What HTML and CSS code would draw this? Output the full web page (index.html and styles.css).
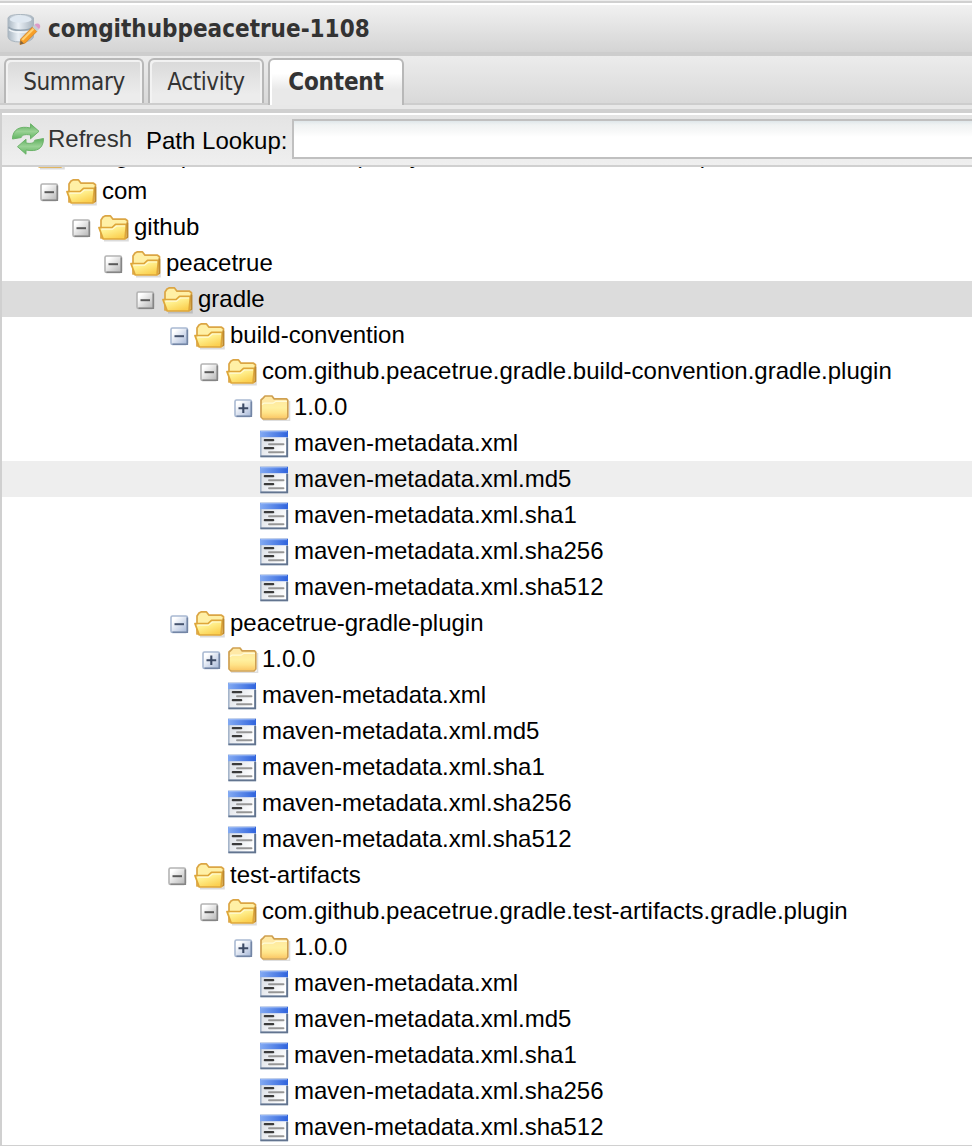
FILE: index.html
```
<!DOCTYPE html>
<html lang="en">
<head>
<meta charset="utf-8">
<title>comgithubpeacetrue-1108</title>
<link rel="stylesheet" href="styles.css">
</head>
<body>
<svg class="defs" width="0" height="0" aria-hidden="true">
  <defs>
    <linearGradient id="gold" x1="0" y1="0" x2="0.6" y2="1"><stop offset="0" stop-color="#fffbc4"/><stop offset="0.45" stop-color="#fff08e"/><stop offset="1" stop-color="#fbd050"/></linearGradient>
    <linearGradient id="shut" x1="0" y1="0" x2="0" y2="1"><stop offset="0" stop-color="#ffe9a0"/><stop offset="0.4" stop-color="#fff0a0"/><stop offset="0.7" stop-color="#ffe388"/><stop offset="1" stop-color="#fbc968"/></linearGradient>
    <linearGradient id="blue" x1="0" y1="0" x2="1" y2="0"><stop offset="0" stop-color="#83aaf2"/><stop offset="1" stop-color="#2f63dd"/></linearGradient>
    <linearGradient id="sheet" x1="0" y1="0" x2="1" y2="0.6"><stop offset="0" stop-color="#d5dae2"/><stop offset="1" stop-color="#ffffff"/></linearGradient>
    <linearGradient id="btnGrey" x1="0" y1="0" x2="1" y2="1"><stop offset="0.2" stop-color="#ffffff"/><stop offset="1" stop-color="#b4b4b4"/></linearGradient>
    <linearGradient id="btnBlue" x1="0" y1="0" x2="1" y2="1"><stop offset="0.2" stop-color="#ffffff"/><stop offset="1" stop-color="#a5b7d8"/></linearGradient>
    <linearGradient id="drum" x1="0" y1="0" x2="1" y2="0"><stop offset="0" stop-color="#a9b6c1"/><stop offset="0.4" stop-color="#eaf0f6"/><stop offset="1" stop-color="#a7b3be"/></linearGradient>
    <linearGradient id="leaf" x1="0" y1="0" x2="0" y2="1"><stop offset="0" stop-color="#5cae5c"/><stop offset="0.5" stop-color="#9ad295"/><stop offset="1" stop-color="#5fb45f"/></linearGradient>

    <symbol id="open" viewBox="0 0 32 32">
      <path d="M6 29.6H29.8V12" fill="none" stroke="#000" stroke-opacity=".14" stroke-width="2"/>
      <path d="M3 27V9L5 6 7 4.9H12.5L15 8.2H27.5L29.5 9.7V26L28 27.5Z" fill="#fff0a6" stroke="#dba544" stroke-width="1.7" stroke-linejoin="round"/>
      <path d="M1 16.6H14L17.5 13.4H28.4L27 28H5.2Z" fill="url(#gold)" stroke="#dea63a" stroke-width="1.7" stroke-linejoin="round"/>
      <path d="M29.3 11.5V27" stroke="#bd8830" stroke-width="1.5"/>
      <path d="M3.5 18.1H14.5L18.3 15H27" fill="none" stroke="#fffad6" stroke-width="1.2"/>
    </symbol>
    <symbol id="closed" viewBox="0 0 32 32">
      <path d="M3 29.3H29.5V10" fill="none" stroke="#000" stroke-opacity=".13" stroke-width="1.6"/>
      <path d="M1 26V9L3.3 6.9 5 5H12L14 7.8H26.5L27.8 9.4V26L26 28H3Z" fill="#ffe9a6" stroke="#cfa050" stroke-width="1.7" stroke-linejoin="round"/>
      <path d="M2 13L4 11.8H13L16 10H27V25.8L25.8 27H3.2L2 25.8Z" fill="url(#shut)"/>
      <path d="M2 13.4L4 12.2H13L16 10.3H27" fill="none" stroke="#fffbd8" stroke-width="1.2"/>
    </symbol>
    <symbol id="file" viewBox="0 0 32 32">
      <rect x=".8" y="4.4" width="26.4" height="25" fill="url(#sheet)" stroke="#a5b5ca" stroke-width="1.6"/>
      <path d="M27.2 11V29.4H.5" fill="none" stroke="#62748f" stroke-width="1.9"/>
      <path d="M0 3.8H28V10.2H0Z" fill="url(#blue)"/>
      <path d="M1 4.6H27" stroke="#a9c5fa" stroke-opacity=".6" stroke-width="1.2"/>
      <path d="M4.8 13.2H13.2M4.8 21.2H13.2" stroke="#3a3a3a" stroke-width="2.2" stroke-linecap="round"/>
      <path d="M9 17.2H23.5M9 25.2H23.5" stroke="#969696" stroke-width="1.9" stroke-linecap="round"/>
    </symbol>
    <symbol id="minus" viewBox="0 0 20 20">
      <rect x="1" y="1" width="16.4" height="16.4" rx="1.5" fill="url(#btnGrey)" stroke="#b4b4b4" stroke-width="1.6"/>
      <path d="M17.3 2.5V17.3H2.5" fill="none" stroke="#858585" stroke-width="1.6"/>
      <path d="M4.5 9.2H14" stroke="#5a5a5a" stroke-width="2"/>
    </symbol>
    <symbol id="minusBlue" viewBox="0 0 20 20">
      <rect x="1" y="1" width="16.4" height="16.4" rx="1.5" fill="url(#btnBlue)" stroke="#a9b9d2" stroke-width="1.6"/>
      <path d="M17.3 2.5V17.3H2.5" fill="none" stroke="#7385a5" stroke-width="1.6"/>
      <path d="M4.5 9.2H14" stroke="#46546f" stroke-width="2"/>
    </symbol>
    <symbol id="plus" viewBox="0 0 20 20">
      <rect x="1" y="1" width="16.4" height="16.4" rx="1.5" fill="url(#btnBlue)" stroke="#a9b9d2" stroke-width="1.6"/>
      <path d="M17.3 2.5V17.3H2.5" fill="none" stroke="#7385a5" stroke-width="1.6"/>
      <path d="M4.5 9.2H14.2M9.3 4.4V14" stroke="#3b4964" stroke-width="2.1"/>
    </symbol>
  </defs>
</svg>

<div class="panel">
  <header class="title-bar">
    <svg class="title-icon" viewBox="0 0 34 34">
      <path d="M1 5Q2 1.5 13.5 1.5T26.5 5V24Q25 29 13.5 29T1 24Z" fill="url(#drum)" stroke="#a9b5bf" stroke-width="1"/>
      <ellipse cx="13.7" cy="6.2" rx="11" ry="3.6" fill="#dfe8f1"/>
      <path d="M1.5 14Q4 17.3 13.5 17.3T26 14" fill="none" stroke="#94a3b0" stroke-width="1.6"/>
      <path d="M2 16.5Q5 19.3 13.5 19.3T25.5 16.5" fill="none" stroke="#f2f6f9" stroke-width="1.6"/>
      <path d="M13 31.5L13.7 26 25.5 14 30 18.3 18.3 30Z" fill="#f79e26" stroke="#cf8128" stroke-width=".8"/>
      <path d="M15.3 27L26.6 15.7" stroke="#ffd071" stroke-width="2"/>
      <path d="M13 31.5L13.6 27.6 17 30.6Z" fill="#85653d"/>
      <path d="M25.3 14L27.5 11.8 32 16.2 29.9 18.3Z" fill="#c6cdd2"/>
      <path d="M27.5 11.8L28.8 10.7Q31.5 10 33 12 34 14.3 32 16.2Z" fill="#dc9ac8"/>
    </svg>
    <h1 class="title"><span class="title-text">comgithubpeacetrue-1108</span></h1>
  </header>

  <nav class="tabs">
    <div class="tab tab-summary"><span>Summary</span></div>
    <div class="tab tab-activity"><span>Activity</span></div>
    <div class="tab tab-content active"><span>Content</span></div>
  </nav>
  <div class="tab-spacer"></div>

  <main class="body">
    <div class="toolbar">
      <svg class="refresh-icon" viewBox="0 0 32 32">
        <path d="M.5 16C.5 6.5 8 2.5 18.5 5V.8L27 8.3 18.5 15.8V12C12 10.8 9.8 12.5 9.2 14.5Z" fill="url(#leaf)" stroke="#6cb36a" stroke-width="1" stroke-linejoin="round"/>
        <path d="M31.5 15.5C31.5 25.5 25 29.2 14 27V31.2L5.5 23.7 14 16.2V20C20 21.2 22.3 19.5 22.8 17.2Z" fill="url(#leaf)" stroke="#6cb36a" stroke-width="1" stroke-linejoin="round"/>
      </svg>
      <span class="refresh">Refresh</span>
      <label class="lookup" for="path">Path Lookup:</label>
      <input class="path" id="path" type="text">
    </div>
    <div class="tree" id="tree"></div>
  </main>
</div>
<script src="tree.js"></script>
</body>
</html>
```
FILE: styles.css
```
* { box-sizing: border-box; }
body { margin: 0; background: #fff; color: #000; font-family: "Liberation Sans", Arial, sans-serif; font-size: 24px; }
.defs { display: block; }
svg { flex: none; }
.panel { width: 972px; height: 1146px; overflow: hidden; display: flex; flex-direction: column; }

.title-bar { height: 56px; flex: none; display: flex; align-items: flex-start; padding: 11px 0 0 7px;
  border-top: 1px solid #ececec; border-bottom: 4px solid #cdcdcd;
  background: linear-gradient(#d0d0d0 0 2px, #fff 2px 4px, #f1f1f1 4px, #d4d4d4 100%); }
.title-icon { width: 34px; height: 34px; margin-top: 1px; }
.title { margin: 0 0 0 7px; font: bold 24px/34px "DejaVu Sans Condensed", "DejaVu Sans", sans-serif; font-stretch: condensed; color: #333; white-space: nowrap; }
.title-text { display: block; }

.tabs { height: 49px; flex: none; display: flex; align-items: flex-start; gap: 4px; padding: 2px 0 0 4px;
  background: linear-gradient(#cdcdcd, #cdcdcd) 0 47px / 100% 2px no-repeat, linear-gradient(#ececec, #d8d8d8); }
.tab { height: 45px; border: 2px solid #b8b8b8; border-bottom: 0; border-radius: 6px 6px 0 0; color: #333;
  background: linear-gradient(#d9d9d9, #ececec 80%); box-shadow: inset 2px 2px 0 #f2f2f2, inset -2px 0 0 #f2f2f2;
  font: 24px/45px "DejaVu Sans Condensed", "DejaVu Sans", sans-serif; font-stretch: condensed; text-align: center; letter-spacing: -.4px; white-space: nowrap; }
.tab span { display: block; }
.tab-summary { width: 140px; }
.tab-activity { width: 116px; }
.tab-content { width: 136px; }
.tab.active { height: 47px; font-weight: bold; letter-spacing: -.2px; background: linear-gradient(#fff 0, #fff 30%, #e9e9e9 65%); box-shadow: inset 2px 2px 0 #fff; }
.tab-spacer { height: 4px; flex: none; background: #e8e8e8; }

.body { flex: 1; min-height: 0; display: flex; flex-direction: column; border: solid #d0d0d0; border-width: 4px 0 1px 2px; }
.toolbar { height: 54px; flex: none; display: flex; align-items: flex-start; padding: 0 0 0 10px; border-bottom: 2px solid #d0d0d0;
  background: linear-gradient(#fff 0 2px, #e4e4e4 2px, #efefef 100%); }
.refresh-icon { width: 32px; height: 32px; margin-top: 10px; }
.refresh { margin: 9px 0 0 4px; line-height: 34px; color: #333; width: 98px; }
.lookup { margin-top: 11px; line-height: 34px; width: 146px; white-space: nowrap; }
.path { height: 40px; flex: 1; margin: 6px -10px 0 0; border: 2px solid #c0c0c0; outline: 0;
  background: linear-gradient(#dfe7ea 0, #f0f3f3 4px, #f7f8f8 10px, #fff 16px); }

.tree { flex: 1; min-height: 0; overflow: hidden; }
.row { height: 36px; display: flex; align-items: flex-start; line-height: 36px; white-space: nowrap; }
.row.root { margin-top: -30px; }
.row.root::after { content: ")"; margin-left: 279px; }
.row.selected { background: #dcdcdc; }
.row.hover { background: #eee; }
.toggle { width: 20px; height: 20px; margin: 10px 6px 0 0; }
.toggle.shift { margin-left: 2px; margin-right: 4px; }
.node { width: 32px; height: 32px; margin: 2px 4px 0 0; }
.node.inset { margin-left: 2px; margin-right: 2px; }
```
FILE: tree.js
```
// Each entry: depth, toggle symbol, node symbol, label, row state
const metadata = (depth, hovered) => ["", ".md5", ".sha1", ".sha256", ".sha512"].map(
  ext => [depth, "", "file", "maven-metadata.xml" + ext, hovered === ext && ext ? "hover" : ""]);

const rows = [
  [-1, "minus", "open", "comgithubpeacetrue-1108 (Entity", "root"],
  [0, "minus", "open", "com", ""],
  [1, "minus", "open", "github", ""],
  [2, "minus", "open", "peacetrue", ""],
  [3, "minus", "open", "gradle", "selected"],
  [4, "minusBlue", "open", "build-convention", ""],
  [5, "minus", "open", "com.github.peacetrue.gradle.build-convention.gradle.plugin", ""],
  [6, "plus", "closed", "1.0.0", ""],
  ...metadata(6, ".md5"),
  [4, "minusBlue", "open", "peacetrue-gradle-plugin", ""],
  [5, "plus", "closed", "1.0.0", ""],
  ...metadata(5),
  [4, "minus", "open", "test-artifacts", ""],
  [5, "minus", "open", "com.github.peacetrue.gradle.test-artifacts.gradle.plugin", ""],
  [6, "plus", "closed", "1.0.0", ""],
  ...metadata(6)
];

document.getElementById("tree").innerHTML = rows.map(([depth, toggle, node, label, state]) => {
  const start = 38 + depth * 32 + (toggle ? 0 : 26);
  const shift = toggle === "plus" || toggle === "minusBlue" ? " shift" : "";
  const inset = node === "open" ? "" : " inset";
  const button = toggle ? `<svg class="toggle${shift}"><use href="#${toggle}"/></svg>` : "";
  return `<div class="row ${state}" style="padding-left:${start}px">${button}` +
    `<svg class="node${inset}"><use href="#${node}"/></svg><span>${label}</span></div>`;
}).join("");
```
